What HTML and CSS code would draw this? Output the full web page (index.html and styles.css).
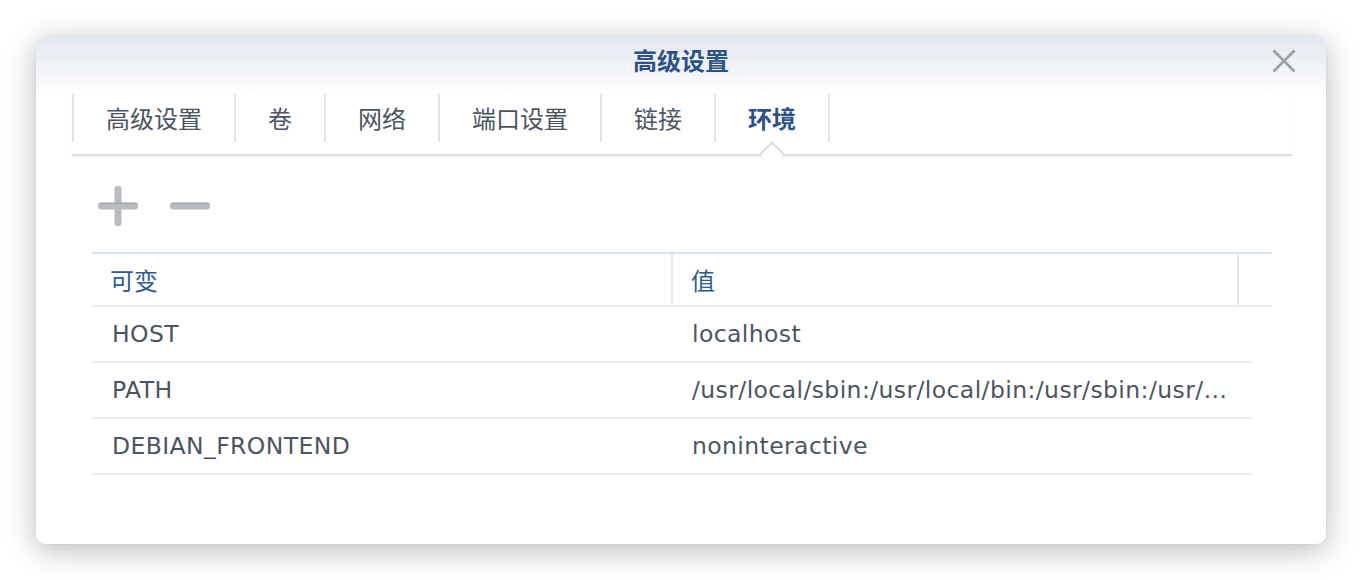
FILE: index.html
```html
<!DOCTYPE html>
<html lang="zh">
<head>
<meta charset="utf-8">
<title>高级设置</title>
<link rel="stylesheet" href="styles.css">
</head>
<body>
<div class="dialog">
  <div class="header">
    <div></div>
    <div class="title">高级设置</div>
    <div class="close-wrap">
      <svg class="close" width="24" height="24" viewBox="0 0 24 24"><path d="M1.5 1.5 L22.5 22.5 M22.5 1.5 L1.5 22.5" stroke="#9da1a6" stroke-width="2.6" fill="none"/></svg>
    </div>
  </div>
  <div class="tabs-wrap">
    <div class="tabs">
      <div class="tab">高级设置</div>
      <div class="tab">卷</div>
      <div class="tab">网络</div>
      <div class="tab">端口设置</div>
      <div class="tab">链接</div>
      <div class="tab active">环境</div>
    </div>
  </div>
  <div class="toolbar">
    <svg class="tool" width="40" height="40" viewBox="0 0 40 40">
      <defs>
        <linearGradient id="gh" x1="0" y1="0" x2="0" y2="1">
          <stop offset="0" stop-color="#979ba0"/>
          <stop offset="0.3" stop-color="#b8bbc0"/>
          <stop offset="1" stop-color="#b8bbc0"/>
        </linearGradient>
      </defs>
      <rect x="16.5" y="0" width="7" height="40" rx="3" fill="#b8bbc0"/>
      <rect x="0" y="16.5" width="40" height="7" rx="3" fill="url(#gh)"/>
    </svg>
    <svg class="tool" width="40" height="40" viewBox="0 0 40 40">
      <rect x="0" y="16.5" width="40" height="7" rx="3" fill="url(#gh)"/>
    </svg>
  </div>
  <div class="table">
    <div class="thead">
      <div class="th">可变</div>
      <div class="th">值</div>
      <div class="th"></div>
    </div>
    <div class="row">
      <div class="td">HOST</div>
      <div class="td">localhost</div>
    </div>
    <div class="row">
      <div class="td">PATH</div>
      <div class="td">/usr/local/sbin:/usr/local/bin:/usr/sbin:/usr/bin:/sbin:/bin</div>
    </div>
    <div class="row">
      <div class="td">DEBIAN_FRONTEND</div>
      <div class="td">noninteractive</div>
    </div>
  </div>
</div>
</body>
</html>
```

FILE: styles.css
```css
html, body {
  margin: 0;
  padding: 0;
  background: #ffffff;
}
body {
  padding: 36px 36px 36px 36px;
  font-family: "DejaVu Sans", "Noto Sans CJK SC", sans-serif;
  color: #4b5562;
}
.dialog {
  width: 1290px;
  height: 508px;
  box-sizing: border-box;
  border-radius: 10px;
  background: linear-gradient(to bottom, #e3e8f0 0px, #f4f6f9 40px, #ffffff 62px, #ffffff 100%);
  box-shadow: 0 6px 30px rgba(0, 0, 0, 0.28), 0 0 3px rgba(0, 0, 0, 0.06);
  overflow: hidden;
}
.header {
  height: 58px;
  display: grid;
  grid-template-columns: 1fr auto 1fr;
  align-items: center;
}
.title {
  font-family: "Noto Sans CJK SC", sans-serif;
  font-size: 24px;
  font-weight: 700;
  color: #2d5287;
  line-height: 1;
  padding-bottom: 10px;
}
.close-wrap {
  display: flex;
  justify-content: flex-end;
  padding-right: 30px;
  padding-bottom: 9px;
}
.close {
  display: block;
}
.tabs-wrap {
  margin: 0 34px 0 36px;
  padding-bottom: 12px;
  border-bottom: 2px solid #dadcdf;
  box-shadow: 0 2px 2px rgba(0, 0, 0, 0.05);
}
.tabs {
  display: flex;
  height: 48px;
  border-left: 2px solid #dde3ea;
}
.tab {
  position: relative;
  display: flex;
  align-items: center;
  padding: 0 32px 0 32px;
  border-right: 2px solid #dde3ea;
  font-family: "Noto Sans CJK SC", sans-serif;
  font-size: 24px;
  color: #4b5461;
  line-height: 1;
}
.tab.active {
  color: #2d5287;
  font-weight: 700;
}
.tab.active::after {
  content: "";
  position: absolute;
  left: 50%;
  bottom: -21px;
  width: 16px;
  height: 16px;
  margin-left: -9px;
  background: #ffffff;
  border-top: 2px solid #dadcdf;
  border-left: 2px solid #dadcdf;
  transform: rotate(45deg);
}
.toolbar {
  display: flex;
  gap: 32px;
  padding: 30px 0 0 62px;
  height: 40px;
}
.tool {
  display: block;
}
.table {
  margin: 26px 54px 0 56px;
}
.thead {
  display: grid;
  grid-template-columns: 581px 566px 1fr;
  height: 55px;
  border-top: 2px solid #dae2eb;
  border-bottom: 2px solid #e9eef4;
  box-sizing: border-box;
}
.th {
  display: flex;
  align-items: center;
  padding-left: 18px;
  font-family: "Noto Sans CJK SC", sans-serif;
  font-size: 24px;
  color: #2e5a92;
  border-right: 2px solid #e3e9f0;
}
.th:last-child {
  border-right: none;
}
.row {
  display: grid;
  grid-template-columns: 581px 1fr;
  width: 1160px;
  height: 56px;
  box-sizing: border-box;
  border-bottom: 2px solid #e9eef4;
}
.td {
  display: flex;
  align-items: center;
  padding: 0 12px 0 20px;
  font-size: 23.5px;
  letter-spacing: 0.4px;
  color: #4b5562;
  white-space: nowrap;
  overflow: hidden;
  min-width: 0;
}
.td:nth-child(2) {
  display: block;
  line-height: 55px;
  padding-left: 19px;
  text-overflow: ellipsis;
}
```
